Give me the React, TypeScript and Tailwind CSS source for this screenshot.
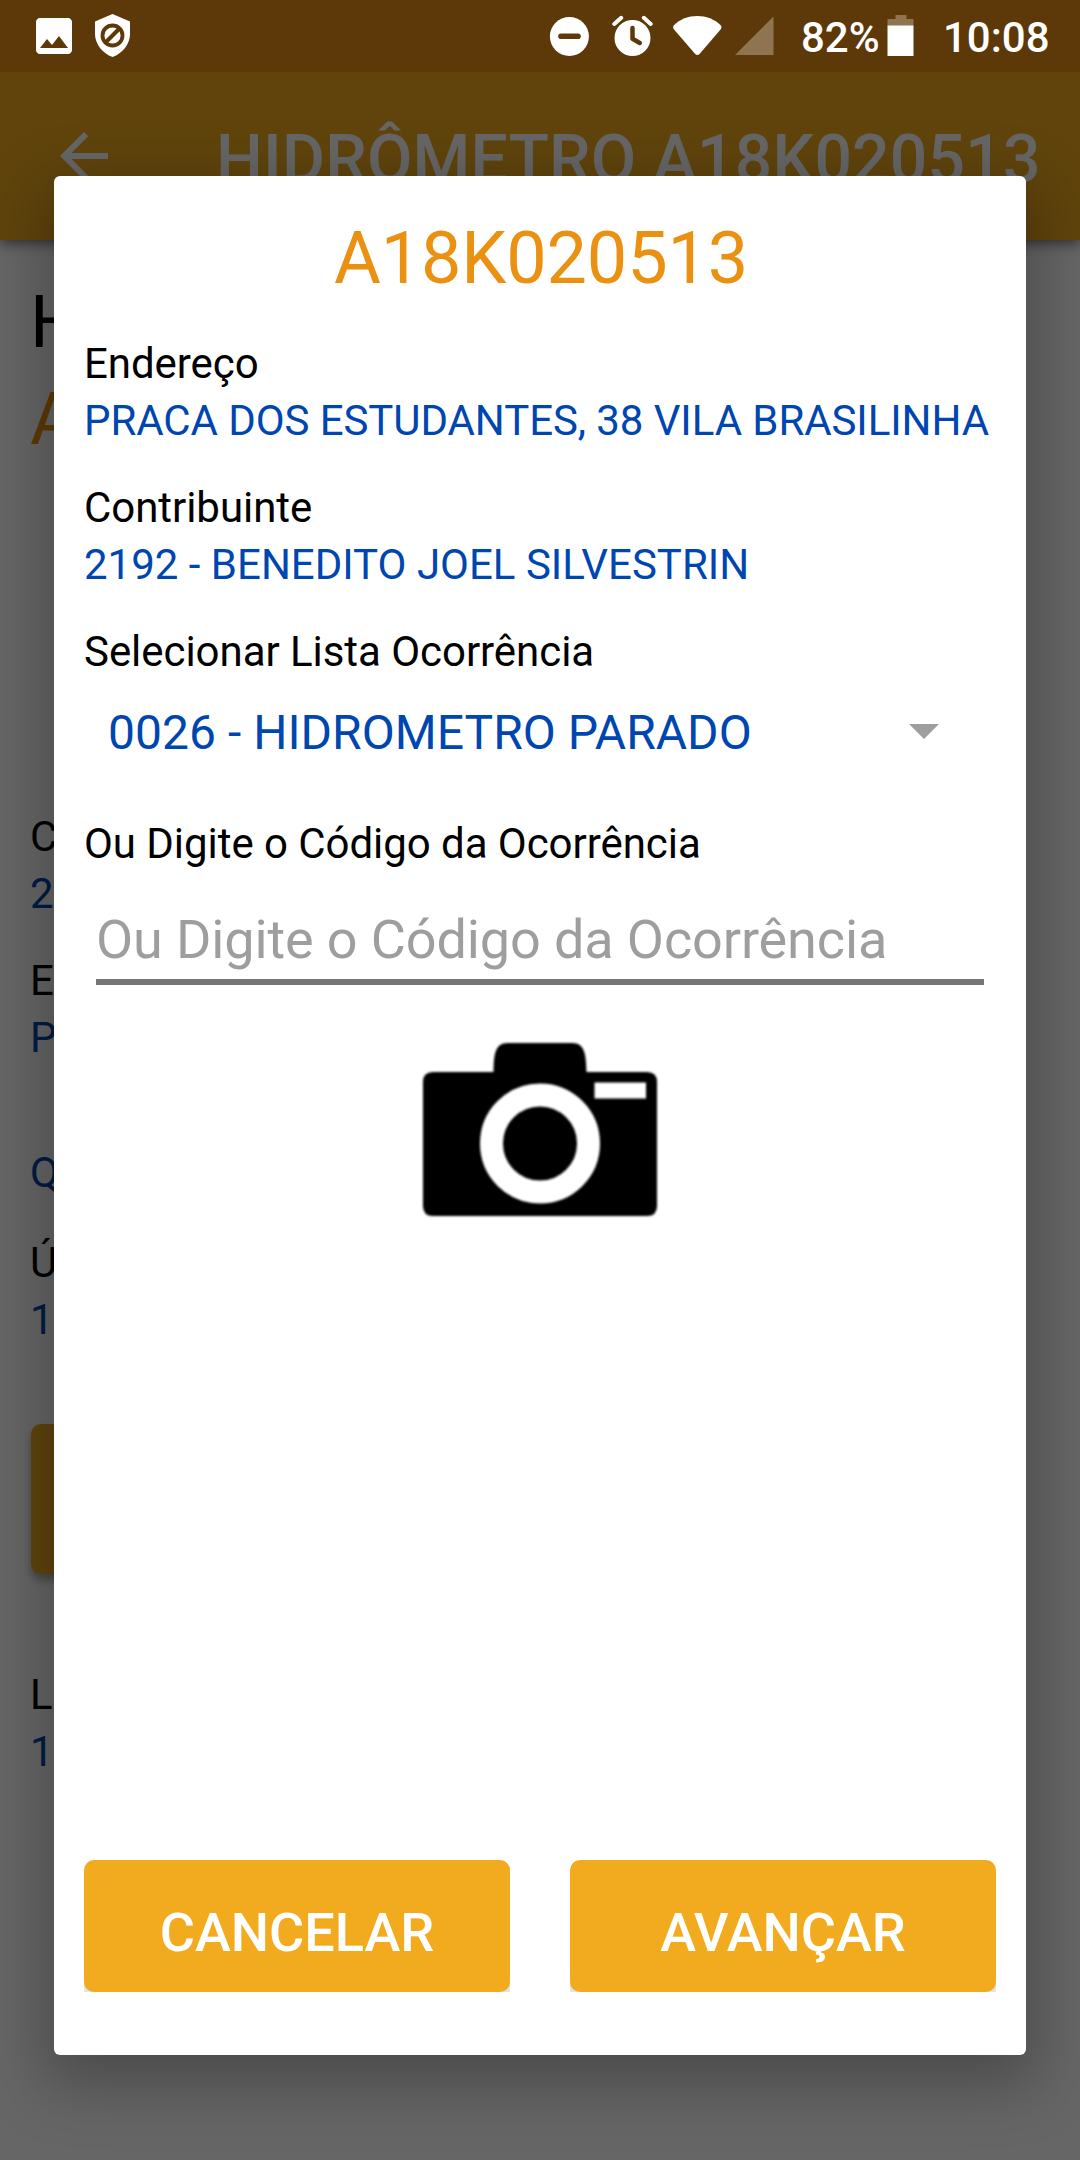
import React from "react";
import { MdArrowBack, MdImage } from "react-icons/md";

interface Entry {
  label?: string;
  value?: string;
  valueClass?: string;
}

const details: Entry[] = [
  {
    label: "Endereço",
    value: "PRACA DOS ESTUDANTES, 38 VILA BRASILINHA",
    valueClass: "tracking-[-0.08px]",
  },
  {
    label: "Contribuinte",
    value: "2192 - BENEDITO JOEL SILVESTRIN",
    valueClass: "tracking-normal",
  },
];

function Field({ label, value, valueClass = "" }: Entry) {
  return (
    <div className="text-[42px] leading-[57px] tracking-[-0.05px] whitespace-nowrap">
      {label && <p className="text-black">{label}</p>}
      {value && <p className={`text-[#0046b0] ${valueClass}`}>{value}</p>}
    </div>
  );
}

function StatusBar() {
  return (
    <div className="relative z-20 flex h-[72px] items-start pl-[30px] text-white">
      <MdImage className="mt-3 size-12" />
      <svg className="ml-[9px] h-[72px] w-12" viewBox="0 0 48 72">
        <path d="M25.500 14L43 21.500V34C43 44 35.500 53.500 25.500 57C15.500 53.500 8 44 8 34V21.500Z" fill="#fff" />
        <circle cx="25.500" cy="35.500" r="10" fill="none" stroke="#5d3808" strokeWidth="3.800" />
        <path d="M18.500 42.500L32.500 28.500" stroke="#5d3808" strokeWidth="4" />
      </svg>

      <div className="ml-auto flex w-[531px]">
        {/* do not disturb */}
        <svg className="h-[72px] w-[41px]" viewBox="0 0 41 72">
          <circle cx="20.400" cy="36.500" r="19.500" fill="#fff" />
          <path d="M12 36.200H29" stroke="#5d3808" strokeWidth="5.600" strokeLinecap="round" />
        </svg>
        {/* alarm */}
        <svg className="ml-[22px] h-[72px] w-[42px]" viewBox="0 0 42 72">
          <circle cx="20.500" cy="38" r="18" fill="#fff" />
          <path d="M2.300 24L9.200 17.800M31.800 17.800L38.700 24" stroke="#fff" strokeWidth="4" strokeLinecap="round" />
          <path d="M20.500 28V38.800L27.800 43" fill="none" stroke="#5d3808" strokeWidth="4.500" strokeLinecap="round" strokeLinejoin="round" />
        </svg>
        {/* wifi */}
        <svg className="ml-[18px] h-[72px] w-[51px]" viewBox="0 0 51 72">
          <path d="M1.700 25.500C8 19 16.500 16 25.300 16C34 16 42.500 19 48.900 25.500Q50 27 49 29L27.500 54Q25.300 56 23.200 54L1.600 29Q.5 27 1.700 25.500Z" fill="#fff" />
        </svg>
        {/* mobile signal */}
        <svg className="ml-3 h-[72px] w-[39px]" viewBox="0 0 39 72">
          <path d="M0 55L38.500 16.500V55Z" fill="#8f7452" />
        </svg>
        <span className="ml-[27px] w-[86px] pt-[9px] text-[42px] leading-[57px] font-medium">82%</span>
        <svg className="h-[72px] w-[28px]" viewBox="0 0 28 72">
          <path d="M8.500 15H19.500V19H26.500V26H.5V19H8.500Z" fill="#8f7452" />
          <path d="M.5 25.500H26.500V56H.5Z" fill="#fff" />
        </svg>
        <span className="ml-7 pt-[9px] text-[42px] leading-[57px] font-medium">10:08</span>
      </div>
    </div>
  );
}

// Reading screen that stays behind the dialog
function ReadingScreen() {
  return (
    <div className="absolute inset-0 isolate flex flex-col overflow-hidden bg-white">
      <div className="z-20 h-[72px] shrink-0 bg-[#e88c14]" />
      <header className="z-10 flex h-[168px] shrink-0 items-start bg-[#f0aa1e] pt-12 pl-12 text-white shadow-[0_4px_12px_rgba(0,0,0,0.5)]">
        <MdArrowBack className="size-[72px]" />
        <h1 className="mt-px ml-24 text-[66px] leading-[78px] font-medium tracking-[0.2px] whitespace-nowrap">
          HIDRÔMETRO A18K020513
        </h1>
      </header>
      <main className="flex flex-col pl-[30px]">
        <div className="mt-[34px] text-[72px] leading-[97px]">
          <p className="text-black">H</p>
          <p className="text-[#ea9111]">A</p>
        </div>
        <div className="mt-[340px] flex flex-col gap-[30px]">
          <Field label="C" value="2" />
          <Field label="E" value="P" />
        </div>
        <div className="mt-[78px] flex flex-col gap-[33px]">
          <Field value="Q" />
          <Field label="Ú" value="1" />
        </div>
        <div className="mt-[76px] ml-px h-[150px] w-[494px] rounded-[10px] bg-[#f0aa1e] shadow-[0_6px_8px_rgba(0,0,0,0.3)]" />
        <div className="mt-[92px]">
          <Field label="L" value="1" />
        </div>
      </main>
      <div className="absolute inset-0 z-30 bg-black/60" />
    </div>
  );
}

function Camera() {
  return (
    <svg className="mx-auto h-[176px] w-[236px] blur-[1px]" viewBox="422 1040.500 236 176">
      <path
        d="M433 1071.500H493.500C494 1056 494 1042.500 508 1042.500H572C585.500 1042.500 586 1056 586.500 1071.500H647Q657 1071.500 657 1081.500V1205.500Q657 1215.500 647 1215.500H433Q423 1215.500 423 1205.500V1081.500Q423 1071.500 433 1071.500Z"
        fill="#000"
      />
      <circle cx="540" cy="1143" r="48.500" fill="none" stroke="#fff" strokeWidth="23" />
      <path d="M594.500 1082H646V1098H594.500Z" fill="#fff" />
    </svg>
  );
}

function ActionButton({ children }: { children: React.ReactNode }) {
  return (
    <div className="h-[132px] flex-1 bg-[linear-gradient(transparent_90%,#e4e4e4_90%)]">
      <button className="h-full w-full rounded-[10px] bg-[#f2ab1e] pt-3.5 text-[54px] leading-[64px] font-medium text-white">
        {children}
      </button>
    </div>
  );
}

function OccurrenceDialog() {
  return (
    <div className="relative z-10 mx-[54px] mt-[104px] flex h-[1879px] flex-col rounded-[6px] bg-white px-[30px] pt-[41px] shadow-[0_20px_60px_12px_rgba(0,0,0,0.26)]">
      <h2 className="pl-0.5 text-center text-[72px] leading-[84px] tracking-[-0.2px] text-[#ea9111]">A18K020513</h2>

      <div className="mt-[34px] flex flex-col gap-[30px]">
        {details.map((d) => (
          <Field key={d.label} {...d} />
        ))}
        <Field label="Selecionar Lista Ocorrência" />
      </div>

      <div className="mt-[23px] flex h-[60px] items-center justify-between pr-[57px] pl-6">
        <span className="text-[48px] leading-[60px] tracking-[0.03px] text-[#0046b0]">0026 - HIDROMETRO PARADO</span>
        <svg className="-mt-1 h-[15px] w-[30px]" viewBox="0 0 30 15">
          <path d="M0 0H30L15 15Z" fill="#9e9e9e" />
        </svg>
      </div>

      <div className="mt-[52px]">
        <Field label="Ou Digite o Código da Ocorrência" />
      </div>
      <div className="mx-3 mt-9 h-[77px] border-b-[6px] border-[#757575] text-[54px] leading-[64px] tracking-[-0.12px] text-[#9e9e9e]">
        Ou Digite o Código da Ocorrência
      </div>

      <div className="mt-14">
        <Camera />
      </div>

      <div className="mt-auto mb-[63px] flex gap-[60px]">
        <ActionButton>CANCELAR</ActionButton>
        <ActionButton>AVANÇAR</ActionButton>
      </div>
    </div>
  );
}

export default function App() {
  return (
    <div className="relative h-[2160px] w-[1080px] overflow-hidden font-[Roboto,sans-serif]">
      <ReadingScreen />
      <StatusBar />
      <OccurrenceDialog />
    </div>
  );
}
